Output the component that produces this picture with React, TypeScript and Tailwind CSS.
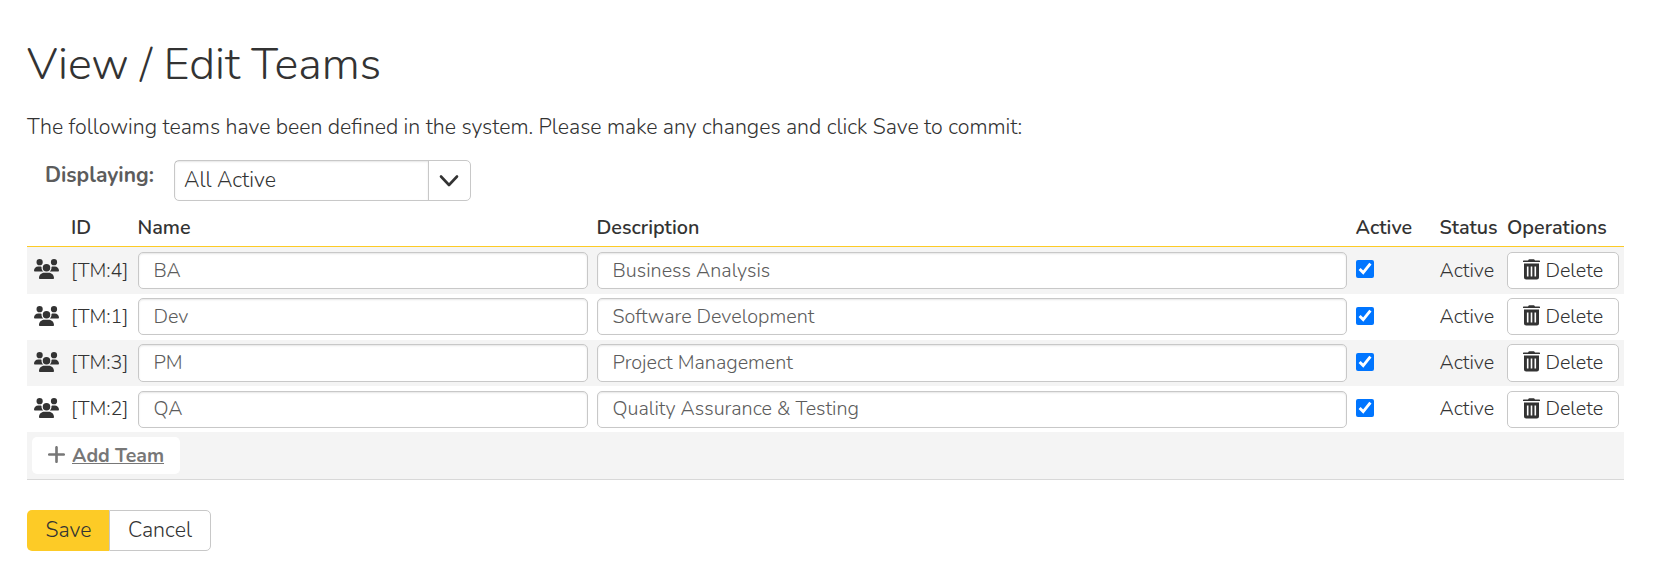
import { FaPlus, FaUsers } from "react-icons/fa6";

const teams = [
  { id: "[TM:4]", name: "BA", description: "Business Analysis" },
  { id: "[TM:1]", name: "Dev", description: "Software Development" },
  { id: "[TM:3]", name: "PM", description: "Project Management" },
  { id: "[TM:2]", name: "QA", description: "Quality Assurance & Testing" },
];

const columns = "grid grid-cols-[44px_67px_459px_759px_84px_67px_117px]";
const field =
  "flex h-[37.2px] items-center rounded-[5px] border border-[#c8c8c8] bg-white pl-[14.5px] text-[#5c5c5c] shadow-[inset_0_1px_2px_rgba(0,0,0,0.1)]";

function TrashIcon() {
  return (
    <svg viewBox="0 0 17 21" className="-mt-[2px] h-[21px] w-[17px] shrink-0" fill="#333">
      <path d="M0.6 1.5H5L5.7 0.6Q5.9 0.3 6.3 0.3H10.7Q11.1 0.3 11.3 0.6L12 1.5H16.4Q17 1.5 17 2.2V3.1H0V2.2Q0 1.5 0.6 1.5Z" />
      <path
        fillRule="evenodd"
        d="M1 4.6H16V18.5Q16 20.6 13.9 20.6H3.1Q1 20.6 1 18.5ZM3.9 7.4V17.6H5.5V7.4ZM7.7 7.4V17.6H9.3V7.4ZM11.5 7.4V17.6H13.1V7.4Z"
      />
    </svg>
  );
}

export default function App() {
  return (
    <main className="h-[588px] w-[1666px] bg-white pl-[27px] font-['Nunito','Lato',sans-serif] font-light text-[#333]">
      <h1 className="flex h-[108px] items-center pt-[23px] text-[44.9px] leading-none font-light">
        View / Edit Teams
      </h1>
      <p className="flex h-[40px] items-center pb-px text-[21.34px] leading-none whitespace-nowrap">
        The following teams have been defined in the system. Please make any changes and click Save to commit:
      </p>

      <div className="flex pt-[12px] pl-[18px]">
        <div className="w-[129px] pt-[4px] text-[21px] leading-[22px] font-bold text-[#5c5c5c]">Displaying:</div>
        <div className="flex h-[41px] w-[297px] rounded-[5px] border border-[#c8c8c8]">
          <div className="flex w-[254px] items-center border-r border-[#c8c8c8] pl-[9px] text-[21.34px] leading-none shadow-[inset_0_1px_2px_rgba(0,0,0,0.1)]">
            All Active
          </div>
          <div className="flex flex-1 items-center justify-center pr-px">
            <svg viewBox="0 0 20 14" className="h-[14px] w-[20px]" fill="none" stroke="#333" strokeWidth="2.6" strokeLinecap="round" strokeLinejoin="round">
              <path d="M2 2.5L10 11L18 2.5" />
            </svg>
          </div>
        </div>
      </div>

      <section className="mt-[5px] w-[1597px] text-[19.8px] leading-none">
        <div className={`${columns} h-[41.3px] items-center border-b border-[#fdcb26] pt-[3px] font-semibold`}>
          <span />
          <span>ID</span>
          <span className="-ml-[0.5px]">Name</span>
          <span className="-ml-[0.5px]">Description</span>
          <span className="-ml-[0.5px]">Active</span>
          <span className="-ml-[0.5px]">Status</span>
          <span>Operations</span>
        </div>
        {teams.map((team) => (
          <div key={team.id} className={`${columns} h-[46.25px] items-start pt-[4.6px] even:bg-[#f4f4f4]`}>
            <FaUsers className="mt-[7.5px] ml-[7px] h-[20px] w-[25px]" />
            <span className="pt-[8.7px]">{team.id}</span>
            <div className={`${field} w-[450px]`}>{team.name}</div>
            <div className={`${field} w-[750px]`}>{team.description}</div>
            <input
              type="checkbox"
              defaultChecked
              aria-label={`${team.name} active`}
              className="mt-[8.5px] size-[18px]"
            />
            <span className="-ml-[0.5px] pt-[8.7px]">Active</span>
            <div className="flex h-[37.2px] w-[112px] items-center gap-[5px] rounded-[5px] border border-[#c8c8c8] bg-white pl-[15.4px]">
              <TrashIcon />
              Delete
            </div>
          </div>
        ))}
        <div className="flex h-[47.7px] items-center border-b border-[#d8d8d8] bg-[#f4f4f4] pl-[5px]">
          <div className="flex h-[37px] w-[148px] items-center rounded-[5px] bg-white pl-[14px] text-[19.5px] font-bold text-[#777]">
            <FaPlus className="mr-[5px] size-[21px] -translate-y-px" />
            <span className="underline">Add Team</span>
          </div>
        </div>
      </section>

      <div className="mt-[30px] flex text-[21.34px] leading-none">
        <div className="flex h-[41px] w-[82px] items-center justify-center rounded-l-[5px] bg-[#fdcb26] pl-px">Save</div>
        <div className="flex h-[41px] w-[102px] items-center justify-center rounded-r-[5px] border border-[#c8c8c8]">
          Cancel
        </div>
      </div>
    </main>
  );
}
